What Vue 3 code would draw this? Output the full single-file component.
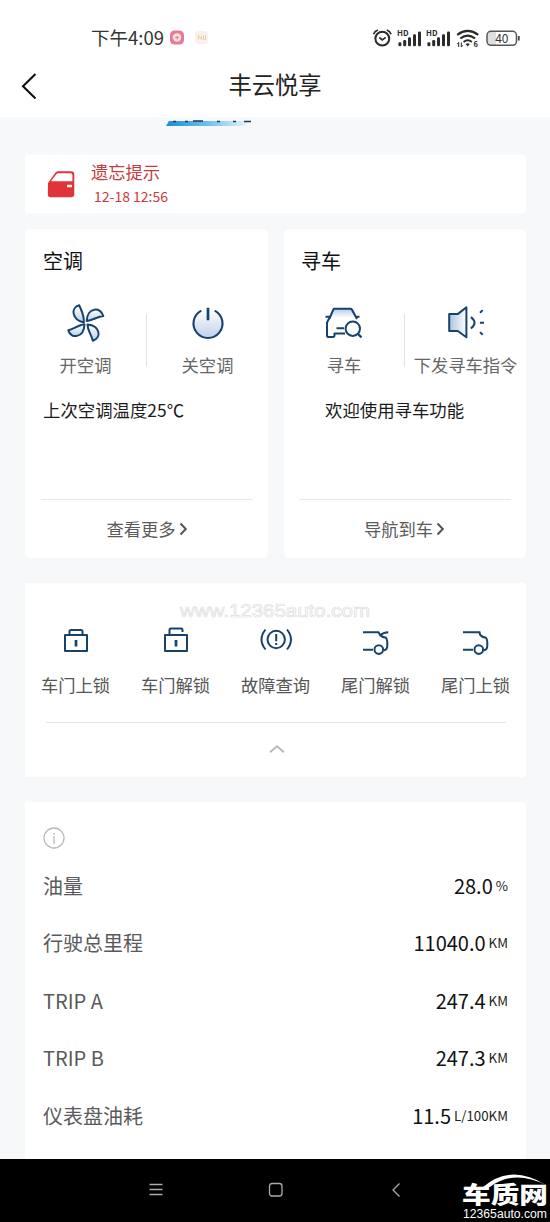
<script setup>
const doors = [
  { icon: 'lock', label: '车门上锁' },
  { icon: 'unlock', label: '车门解锁' },
  { icon: 'fault', label: '故障查询' },
  { icon: 'trunkOpen', label: '尾门解锁' },
  { icon: 'trunk', label: '尾门上锁' },
]
const stats = [
  { name: '油量', value: '28.0', unit: '%' },
  { name: '行驶总里程', value: '11040.0', unit: 'KM' },
  { name: 'TRIP A', value: '247.4', unit: 'KM' },
  { name: 'TRIP B', value: '247.3', unit: 'KM' },
  { name: '仪表盘油耗', value: '11.5', unit: 'L/100KM' },
]
</script>

<template>
  <div class="screen">
    <header class="top">
      <div class="status">
        <span class="time">下午4:09</span>
        <svg class="apps" width="48" height="20" viewBox="0 0 48 20">
          <rect x="4" y="2.500" width="14" height="14" rx="4.500" fill="#e8799c" />
          <circle cx="11" cy="9.500" r="4.200" fill="#fbe3da" />
          <path d="M9 9.500h4M11.200 7.800v3.400" stroke="#d98a86" stroke-width="1.200" />
          <rect x="29" y="3" width="13" height="13" rx="3.500" fill="#f8f2ee" />
          <path d="M32.500 11.500V7.500l3 4V7.500M37.500 7.500v4h2V7.500" fill="none" stroke="#f3c9a4" stroke-width="1" />
        </svg>
        <svg class="signals" width="150" height="26" viewBox="0 0 150 26">
          <g fill="none" stroke="#2b2b2b" stroke-width="2">
            <circle cx="12.300" cy="13.700" r="6.900" />
            <path d="M9.300 12.500l3 2.500 3.400-2.600M3.600 9.200Q4.600 6.100 7.800 5M16.800 5Q20 6.100 21.100 9.200" stroke-width="1.700" />
          </g>
          <g v-for="x in [27, 56]" :key="x" :transform="`translate(${x} 0)`" fill="#2b2b2b">
            <text x="0" y="10.500" font-size="7.500" font-weight="700" textLength="11.500" lengthAdjust="spacingAndGlyphs">HD</text>
            <rect x="1.400" y="17.200" width="3" height="4" rx="1.200" />
            <rect x="6.200" y="15" width="3" height="6.200" rx="1.200" />
            <rect x="11" y="12.200" width="3" height="9" rx="1.200" />
            <rect x="16" y="9.300" width="3" height="11.900" rx="1.200" />
            <rect x="21" y="6.400" width="3" height="14.800" rx="1.200" />
          </g>
          <g fill="none" stroke="#2b2b2b" stroke-width="2.100">
            <path d="M87.200 9.800Q97.700 2 108.200 9.800M90.300 13.500Q97.700 7.700 105.100 13.500M93.600 17Q97.700 13.500 101.800 17" />
          </g>
          <path d="M95.600 19Q97.700 17.400 99.800 19L97.700 21.600z" fill="#2b2b2b" />
          <path d="M88.700 22v-4.600l-1.400 1.700M91.300 17.400V22l1.400-1.700" fill="none" stroke="#2b2b2b" stroke-width="1" />
          <text x="103.600" y="22" font-size="7.500" font-weight="700" fill="#2b2b2b">6</text>
          <path d="M121 6.800h5v13h-5a3.500 3.500 0 0 1-3.500-3.500v-6a3.500 3.500 0 0 1 3.500-3.500z" fill="#dedede" />
          <rect x="117" y="6.300" width="29.500" height="14" rx="4" fill="none" stroke="#555" stroke-width="1.500" />
          <path d="M148.800 11v4.500" stroke="#444" stroke-width="1.800" />
          <text x="131.800" y="17.700" font-size="12" text-anchor="middle" fill="#333">40</text>
        </svg>
      </div>
      <div class="titlebar">
        <svg class="back" width="20" height="30" viewBox="0 0 20 30">
          <path d="M15.500 3L3 15.200 15.500 27.500" fill="none" stroke="#111" stroke-width="2.100" />
        </svg>
        <h1>丰云悦享</h1>
      </div>
    </header>

    <main>
      <div class="banner">
        <svg width="90" height="9" viewBox="0 0 90 9">
          <defs>
            <linearGradient id="banner" x1="0" x2="1"><stop offset="0" stop-color="#168ed8" /><stop offset=".5" stop-color="#6fc0ee" /><stop offset="1" stop-color="#eef7fd" /></linearGradient>
          </defs>
          <path d="M3 4H84L79 9H0z" fill="url(#banner)" />
          <path d="M7 4.500h3M19 4.500h3M27 4h10M51 4.500h3M67 4.500h3M78 4.500h7" stroke="#263746" stroke-width="1.600" />
        </svg>
      </div>

      <section class="card alert">
        <svg width="28" height="28" viewBox="0 0 28 28">
          <path d="M1 13L8.300 2.800Q9.200 1.300 10.800 1.300H24Q27.300 1.300 27.300 4.500V24Q27.300 27.300 24 27.300H3.500Q.800 27.300 .800 24z" fill="#e0343a" />
          <path d="M4 11.300L9.500 4Q10 3.200 11 3.200H23.500Q25.400 3.200 25.400 5V11.300z" fill="#fff" />
          <rect x="20" y="14.700" width="5" height="2.500" rx=".500" fill="#fff" />
        </svg>
        <div>
          <p class="alert-title">遗忘提示</p>
          <p class="alert-time">12-18 12:56</p>
        </div>
      </section>

      <div class="pair">
        <section class="card tile">
          <h2>空调</h2>
          <div class="actions">
            <div class="action">
              <svg width="40" height="40" viewBox="0 0 40 40">
                <defs>
                  <linearGradient id="shade" x1="0" y1="0" x2="0" y2="1"><stop offset="0" stop-color="#fff" /><stop offset="1" stop-color="#bdd2e8" /></linearGradient>
                  <linearGradient id="shadeTop" x1="0" y1="0" x2="0" y2="1"><stop offset="0" stop-color="#b3cbe5" /><stop offset="1" stop-color="#fff" /></linearGradient>
                </defs>
                <g fill="url(#shade)" stroke="#17436b" stroke-width="2" stroke-linejoin="round">
                  <path d="M17.800 19.500C5.500 16.500 4.500 4.500 13.300 2.300C15 7 18.500 12 17.800 19.500z" />
                  <path d="M20.700 18C21 4 35 3.500 37.300 13C31.500 13.500 26.500 17.500 20.700 18z" />
                  <path d="M18.500 21.200C18 35.500 4.500 36 2.300 27.300C8 25.500 13 22 18.500 21.200z" />
                  <path d="M21.500 21.500C34 22.500 36 34.500 26.800 37.700C25.500 31.500 21.500 28 21.500 21.500z" />
                </g>
              </svg>
              <span>开空调</span>
            </div>
            <i class="divider"></i>
            <div class="action">
              <svg width="40" height="40" viewBox="0 0 40 40">
                <circle cx="20" cy="21" r="14" fill="url(#shade)" />
                <path d="M13.300 7.600A14.500 14.500 0 1 0 26.700 7.600" fill="none" stroke="#17436b" stroke-width="2.100" />
                <path d="M20 4.800V17.300" stroke="#17436b" stroke-width="2.700" />
              </svg>
              <span>关空调</span>
            </div>
          </div>
          <p class="note">上次空调温度25℃</p>
          <div class="more">查看更多<svg width="9" height="14" viewBox="0 0 9 14"><path d="M1.500 1.500L6.800 7 1.500 12.500" /></svg></div>
        </section>

        <section class="card tile find">
          <h2>寻车</h2>
          <div class="actions">
            <div class="action">
              <svg width="40" height="40" viewBox="0 0 40 40">
                <path d="M9 5.500H29L34 15H4z" fill="url(#shadeTop)" />
                <g fill="none" stroke="#17436b" stroke-width="2" stroke-linejoin="round">
                  <path d="M5.500 15.500L9.300 6.600Q9.700 5.800 10.500 5.800H26.500Q27.300 5.800 27.800 6.600L33 16M1.500 13.700H5.800M32.500 13.700H35.500M5.200 15.200L3 19.500V32.200Q3 34 4.500 34H9Q10.500 34 10.500 32V30.500H21M12.500 25.300H20" />
                  <circle cx="28.800" cy="25.700" r="7.200" fill="#fff" />
                  <path d="M34 31L37.500 34.300" stroke-width="2.400" />
                </g>
              </svg>
              <span>寻车</span>
            </div>
            <i class="divider"></i>
            <div class="action">
              <svg width="40" height="40" viewBox="0 0 40 40">
                <defs>
                  <linearGradient id="shadeSide"><stop offset="0" stop-color="#a9c4df" /><stop offset="1" stop-color="#fff" /></linearGradient>
                </defs>
                <g fill="none" stroke="#17436b" stroke-width="2" stroke-linejoin="round" transform="translate(.7 -.7)">
                  <path d="M2.500 11.800H11L19.700 5V35L11 28.700H2.500z" fill="url(#shadeSide)" />
                  <path d="M24.200 14.800Q31.500 20.500 24.200 26.200M33.300 10.500L36 7.800M33.200 20.500H37.300M33.300 29.800L36 32.500" />
                </g>
              </svg>
              <span>下发寻车指令</span>
            </div>
          </div>
          <p class="note indented">欢迎使用寻车功能</p>
          <div class="more">导航到车<svg width="9" height="14" viewBox="0 0 9 14"><path d="M1.500 1.500L6.800 7 1.500 12.500" /></svg></div>
        </section>
      </div>

      <section class="card doors">
        <svg class="watermark" width="200" height="24" viewBox="0 0 200 24">
          <text x="5" y="18" textLength="190" lengthAdjust="spacingAndGlyphs">www.12365auto.com</text>
        </svg>
        <div class="door-grid">
          <div v-for="d in doors" :key="d.label" class="door">
            <svg width="36" height="32" viewBox="0 0 36 32" fill="none" stroke="#17436b" stroke-width="2">
              <g v-if="d.icon === 'lock'" stroke-linejoin="round">
                <rect x="7" y="11" width="22" height="16" /><path d="M11.500 11V7.500Q11.500 6 13 6H23Q24.500 6 24.500 7.500V11" /><path d="M18 16v6.500" stroke-width="2.700" />
              </g>
              <g v-else-if="d.icon === 'unlock'" stroke-linejoin="round">
                <rect x="7" y="11" width="22" height="16" /><path d="M11.500 11V6Q11.500 4.500 13 4.500H23Q24.500 4.500 24.500 6V8" /><path d="M18 16v6.500" stroke-width="2.700" />
              </g>
              <g v-else-if="d.icon === 'fault'">
                <circle cx="18.200" cy="15.500" r="8.700" />
                <path d="M18.200 10v7.200M18.200 19v2M7.500 5.500Q-.500 15.500 7.500 25.500M29 5.500Q37 15.500 29 25.500" />
              </g>
              <g v-else>
                <path v-if="d.icon === 'trunkOpen'" d="M5 8.200H20.500L22.200 11.200Q25 8.400 30.300 8.200" />
                <path v-else d="M5 8.200H21.500L22.200 11.200" />
                <path d="M22.200 11Q24 13.200 28 13.800Q29.300 15.500 29.300 18V21.500Q29.300 25.800 26 26.200M5 25.800H15" />
                <circle cx="20.800" cy="25.600" r="4.300" />
              </g>
            </svg>
            <span>{{ d.label }}</span>
          </div>
        </div>
        <div class="collapse">
          <svg width="16" height="10" viewBox="0 0 16 10"><path d="M1 8.300L8 2.200 15 8.300" fill="none" stroke="#b8b8b8" stroke-width="1.900" /></svg>
        </div>
      </section>

      <section class="card stats">
        <svg class="info" width="22" height="22" viewBox="0 0 22 22" fill="none" stroke="#bababa">
          <circle cx="11" cy="11" r="10" stroke-width="1.300" /><path d="M11 6v1.700M11 9v8" stroke-width="1.300" />
        </svg>
        <div v-for="s in stats" :key="s.name" class="row">
          <span class="name">{{ s.name }}</span>
          <span class="value">{{ s.value }}</span>
          <span class="unit">{{ s.unit }}</span>
        </div>
      </section>
    </main>

    <nav class="system">
      <svg width="16" height="16" viewBox="0 0 16 16"><path d="M1.500 2.500h13M1.500 7.500h13M1.500 12.500h13" /></svg>
      <svg width="16" height="16" viewBox="0 0 16 16"><rect x="1.500" y="1.500" width="12.500" height="12.500" rx="2.500" /></svg>
      <svg width="16" height="16" viewBox="0 0 16 16"><path d="M11.500 1.500L5 8l6.500 6.500" /></svg>
      <div class="brand">
        <svg width="88" height="49" viewBox="0 0 88 49">
          <path d="M22 14Q50-10 85 12Q53-4 29 14z" fill="#fff" />
          <text class="brand-name" x="1" y="30" textLength="86" lengthAdjust="spacingAndGlyphs">车质网</text>
          <text class="brand-url" x="2" y="45" textLength="84" lengthAdjust="spacingAndGlyphs">12365auto.com</text>
        </svg>
      </div>
    </nav>
  </div>
</template>

<style>
body { margin: 0; overflow: hidden; }
</style>

<style scoped>
* { box-sizing: border-box; }
.screen { width: 550px; height: 1222px; display: flex; flex-direction: column; background: #f7f8fa; color: #1b1b1b; font-family: "Noto Sans CJK SC", sans-serif; overflow: hidden; }
h1, h2, p { margin: 0; font-weight: 400; }
svg { display: block; flex: none; }
.top { height: 117px; flex: none; background: #fff; }
.status { display: flex; align-items: center; height: 50px; padding: 26px 0 0 91px; }
.time { font-size: 18.500px; line-height: 24px; margin-top: -2px; color: #333; width: 75px; white-space: nowrap; }
.signals { margin-left: 156px; margin-top: -1px; }
.titlebar { display: grid; grid-template-columns: 50px 1fr 50px; align-items: center; height: 70px; }
.back { margin-left: 20px; margin-top: 1px; }
h1 { text-align: center; font-size: 23.300px; line-height: 34px; margin-top: -3px; color: #222; }
main { flex: 1; padding: 0 24px 0 25px; }
.banner { height: 38px; padding-left: 141px; }
.card { background: #fff; border-radius: 3px; }
.alert { height: 58px; display: flex; align-items: flex-start; padding: 4px 0 0 22px; color: #c93a40; }
.alert > svg { margin: 11px 16px 0 0; }
.alert-title { font-size: 17.300px; line-height: 26px; }
.alert-time { font-size: 14px; line-height: 24px; margin-top: -1px; padding-left: 3px; }
.pair { display: grid; grid-template-columns: 243px 242px; gap: 16px; margin: 16px 0 25px; }
.tile { height: 329px; border-radius: 5px; padding-top: 17px; display: flex; flex-direction: column; }
h2 { font-size: 20px; line-height: 30px; padding-left: 18px; color: #111; }
.actions { display: grid; grid-template-columns: 121px 1px 121px; height: 90px; margin-top: 27px; }
.action { display: flex; flex-direction: column; align-items: center; white-space: nowrap; }
.action span { font-size: 17.300px; line-height: 26px; margin-top: 9px; color: #666; }
.divider { width: 1px; height: 53px; margin-top: 11px; background: #e2e2e2; }
.note { margin-top: 3px; padding-left: 18px; font-size: 17.400px; line-height: 28px; }
.find h2 { padding-left: 17px; }
.find .actions { grid-template-columns: 120px 1px 121px; }
.indented { padding-left: 41px; }
.more { margin: auto 15px 0 16px; height: 59px; border-top: 1px solid #e8e8e8; display: flex; justify-content: center; align-items: center; gap: 3px; font-size: 17.300px; line-height: 26px; color: #5b5b5b; }
.find .more { margin-left: 15px; padding-right: 1px; }
.more svg path { fill: none; stroke: #555; stroke-width: 2; }
.doors { position: relative; height: 194px; padding-top: 41px; }
.watermark { position: absolute; left: 150px; top: 16px; }
.watermark text { font: 18px "Liberation Sans", sans-serif; fill: #fff; stroke: #dedede; stroke-width: .7px; }
.door-grid { display: grid; grid-template-columns: repeat(5, 100px); padding-left: .5px; }
.door { display: flex; flex-direction: column; align-items: center; }
.door span { margin-top: 16px; font-size: 17.300px; line-height: 26px; color: #555; }
.collapse { margin: 24px 20px 0 21px; border-top: 1px solid #e4e4e4; padding: 21px 0 0 2px; display: flex; justify-content: center; }
.stats { margin-top: 25px; height: 357px; padding: 25px 18px 0; border-radius: 3px 3px 0 0; }
.info { margin-bottom: 7.500px; }
.row { display: flex; align-items: center; height: 57.500px; }
.name { flex: 1; font-size: 20px; color: #5a5a5a; }
.value { font-size: 20px; color: #111; }
.unit { font-size: 13.300px; color: #222; margin-left: 3px; }
.system { position: relative; height: 63px; flex: none; background: #000; display: grid; grid-template-columns: repeat(3, 120px); justify-content: center; justify-items: center; align-items: center; padding: 0 0 2px 2px; }
.system > svg path, .system > svg rect { fill: none; stroke: #aaa; stroke-width: 1.300; }
.brand { position: absolute; left: 461px; top: 14px; }
.brand-name { font-size: 23px; font-weight: 900; fill: #fff; }
.brand-url { font: 12px "Liberation Sans", sans-serif; fill: #fff; }
</style>
